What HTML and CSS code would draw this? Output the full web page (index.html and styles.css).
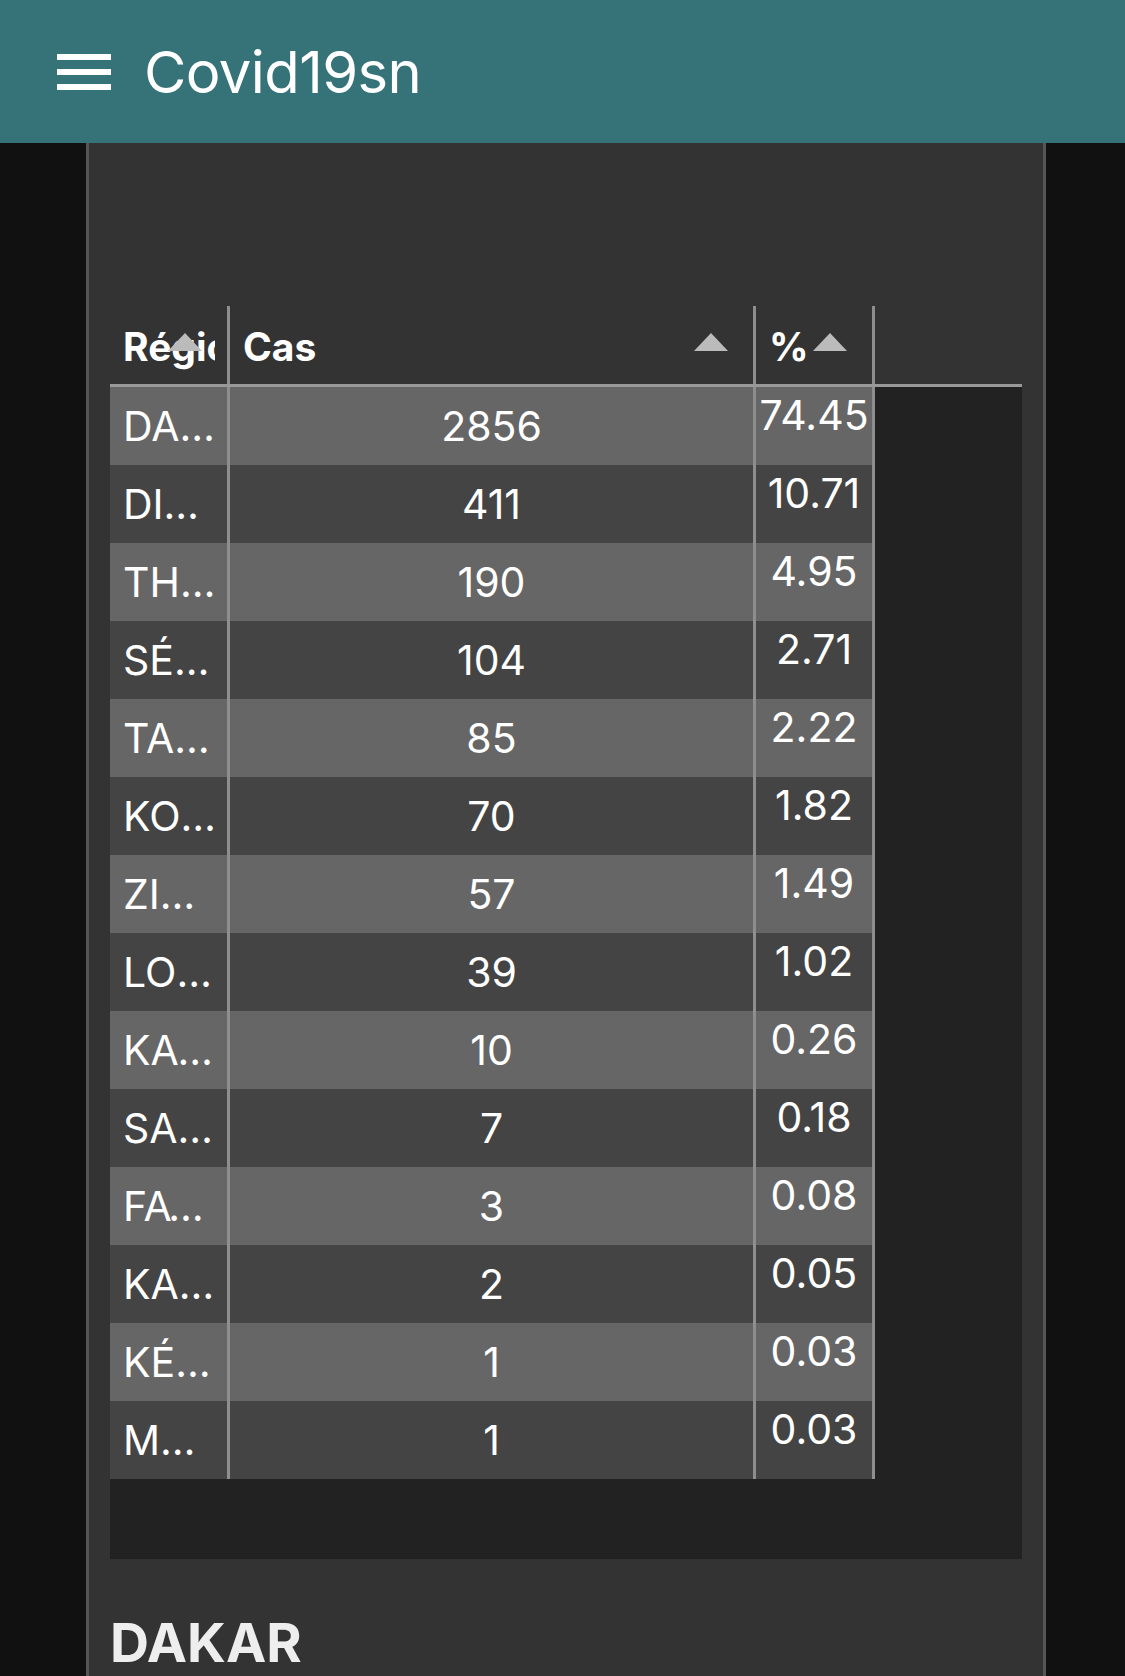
FILE: index.html
```html
<!DOCTYPE html>
<html lang="fr">
<head>
<meta charset="utf-8">
<title>Covid19sn</title>
<link rel="stylesheet" href="styles.css">
</head>
<body>
<header class="appbar">
  <svg class="menu-icon" width="54" height="36" viewBox="0 0 54 36" aria-hidden="true">
    <rect x="0" y="0" width="54" height="6" fill="#fff"/>
    <rect x="0" y="15" width="54" height="6" fill="#fff"/>
    <rect x="0" y="30" width="54" height="6" fill="#fff"/>
  </svg>
  <h1 class="app-title">Covid19sn</h1>
</header>
<main class="card">
  <div class="spacer"></div>
  <div class="table">
    <div class="table-head">
      <div class="th"><span class="th-label">Région</span><span class="sort"></span></div>
      <div class="th"><span class="th-label">Cas</span><span class="sort"></span></div>
      <div class="th"><span class="th-label">%</span><span class="sort"></span></div>
    </div>
    <div class="table-body">
      <div class="tr"><div class="td td-name">DAKAR</div><div class="td td-num">2856</div><div class="td td-pct">74.45</div></div>
      <div class="tr"><div class="td td-name">DIOURBEL</div><div class="td td-num">411</div><div class="td td-pct">10.71</div></div>
      <div class="tr"><div class="td td-name">THIÈS</div><div class="td td-num">190</div><div class="td td-pct">4.95</div></div>
      <div class="tr"><div class="td td-name">SÉDHIOU</div><div class="td td-num">104</div><div class="td td-pct">2.71</div></div>
      <div class="tr"><div class="td td-name">TAMBACOUNDA</div><div class="td td-num">85</div><div class="td td-pct">2.22</div></div>
      <div class="tr"><div class="td td-name">KOLDA</div><div class="td td-num">70</div><div class="td td-pct">1.82</div></div>
      <div class="tr"><div class="td td-name">ZIGUINCHOR</div><div class="td td-num">57</div><div class="td td-pct">1.49</div></div>
      <div class="tr"><div class="td td-name">LOUGA</div><div class="td td-num">39</div><div class="td td-pct">1.02</div></div>
      <div class="tr"><div class="td td-name">KAOLACK</div><div class="td td-num">10</div><div class="td td-pct">0.26</div></div>
      <div class="tr"><div class="td td-name">SAINT-LOUIS</div><div class="td td-num">7</div><div class="td td-pct">0.18</div></div>
      <div class="tr"><div class="td td-name">FATICK</div><div class="td td-num">3</div><div class="td td-pct">0.08</div></div>
      <div class="tr"><div class="td td-name">KAFFRINE</div><div class="td td-num">2</div><div class="td td-pct">0.05</div></div>
      <div class="tr"><div class="td td-name">KÉDOUGOU</div><div class="td td-num">1</div><div class="td td-pct">0.03</div></div>
      <div class="tr"><div class="td td-name">MATAM</div><div class="td td-num">1</div><div class="td td-pct">0.03</div></div>
    </div>
  </div>
  <h2 class="region-title">DAKAR</h2>
</main>
</body>
</html>
```
FILE: styles.css
```css
* { box-sizing: border-box; }

html, body {
  margin: 0;
  padding: 0;
  background: #111111;
  font-family: "Inter", "Roboto", "Liberation Sans", sans-serif;
  color: #ffffff;
}

body {
  height: 1676px;
  overflow: hidden;
}

.appbar {
  height: 143px;
  background: #367379;
  display: flex;
  align-items: center;
  padding-left: 57px;
  gap: 33px;
}

.menu-icon {
  display: block;
  flex: none;
}

.app-title {
  margin: 0;
  font-size: 58px;
  font-weight: 400;
  line-height: 1;
  letter-spacing: -0.6px;
  color: #ffffff;
}

.card {
  display: block;
  margin: 0 79px 0 86px;
  background: #333333;
  border-left: 3px solid #555555;
  border-right: 3px solid #555555;
  padding: 0 21px;
  min-height: 1600px;
}

.spacer {
  height: 163px;
}

.table-head {
  display: grid;
  grid-template-columns: 120px 526px 119px;
  border-bottom: 3px solid #999999;
}

.th {
  position: relative;
  height: 78px;
  border-right: 3px solid #8e8e8e;
  padding: 0 12px 0 13px;
  display: flex;
  align-items: center;
  overflow: hidden;
}

.th-label {
  font-size: 39px;
  font-weight: 700;
  white-space: nowrap;
  overflow: hidden;
  padding-top: 2px;
}

.sort {
  position: absolute;
  right: 25px;
  top: 27px;
  width: 0;
  height: 0;
  border-left: 17.5px solid transparent;
  border-right: 17.5px solid transparent;
  border-bottom: 18px solid #bbbbbb;
}

.table-body {
  background: #222222;
  padding-bottom: 80px;
}

.tr {
  display: grid;
  grid-template-columns: 120px 526px 119px;
  height: 78px;
}

.td {
  border-right: 3px solid #8e8e8e;
  font-size: 41px;
  font-weight: 400;
  white-space: nowrap;
  overflow: hidden;
}

.tr:nth-child(odd) .td { background: #666666; }
.tr:nth-child(even) .td { background: #444444; }

.td-name {
  padding: 0 10px 0 13px;
  line-height: 78px;
  text-overflow: ellipsis;
}

.td-num {
  line-height: 78px;
  text-align: center;
}

.td-pct {
  text-align: center;
  line-height: 48px;
  padding-top: 4px;
}

.region-title {
  margin: 52px 0 0 0;
  font-size: 54px;
  font-weight: 700;
  line-height: 1.2;
  color: #eeeeee;
}
```
